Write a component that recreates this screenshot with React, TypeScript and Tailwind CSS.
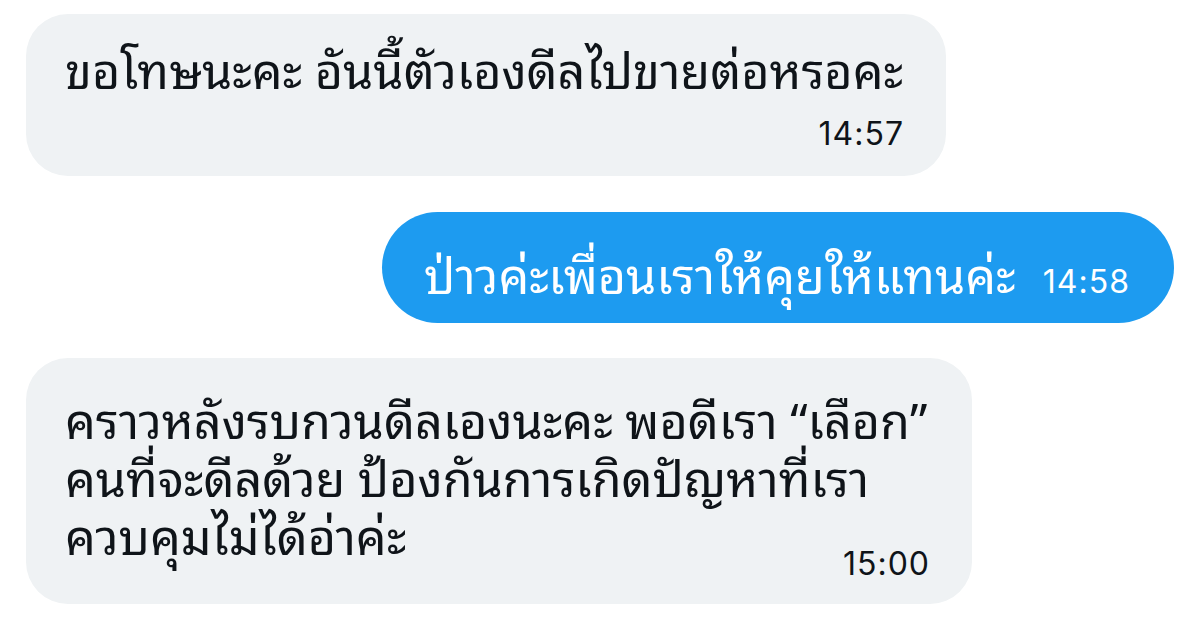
import React from "react";

const thai = "font-['Noto_Sans_Thai_Looped',Loma,sans-serif] text-[48.5px] leading-[58px] whitespace-nowrap";
const time = "font-['Inter','Liberation_Sans',sans-serif] text-[32px] leading-[36px] tracking-[1px]";

export default function App() {
  return (
    <div className="w-[1200px] h-[626px] bg-white flex flex-col pt-[14px] px-[26px] gap-[36px] overflow-hidden">
      <div className="self-start w-[920px] h-[162px] rounded-[42px] bg-[#eff2f4] pl-[39px] pr-[42px] pt-[24px] flex flex-col">
        <div className={`${thai} text-[#0f1419]`}>ขอโทษนะคะ อันนี้ตัวเองดีลไปขายต่อหรอคะ</div>
        <div className={`${time} self-end text-[#0f1419] mt-[20px]`}>14:57</div>
      </div>

      <div className="self-end w-[792px] h-[111px] rounded-full bg-[#1d9bf0] pl-[42px] pr-[44px] flex items-center justify-between">
        <div className={`${thai} text-white mt-[8px]`}>ป่าวค่ะเพื่อนเราให้คุยให้แทนค่ะ</div>
        <div className={`${time} text-white mt-[28px]`}>14:58</div>
      </div>

      <div className="self-start w-[946px] h-[246px] rounded-[42px] bg-[#eff2f4] pl-[39px] pr-[42px] pt-[30px] flex flex-col mt-[-1px]">
        <div className={`${thai} text-[#0f1419]`}>
          <div>คราวหลังรบกวนดีลเองนะคะ พอดีเรา “เลือก”</div>
          <div>คนที่จะดีลด้วย ป้องกันการเกิดปัญหาที่เรา</div>
          <div>ควบคุมไม่ได้อ่าค่ะ</div>
        </div>
        <div className={`${time} self-end text-[#0f1419] mt-[-16px]`}>15:00</div>
      </div>
    </div>
  );
}
